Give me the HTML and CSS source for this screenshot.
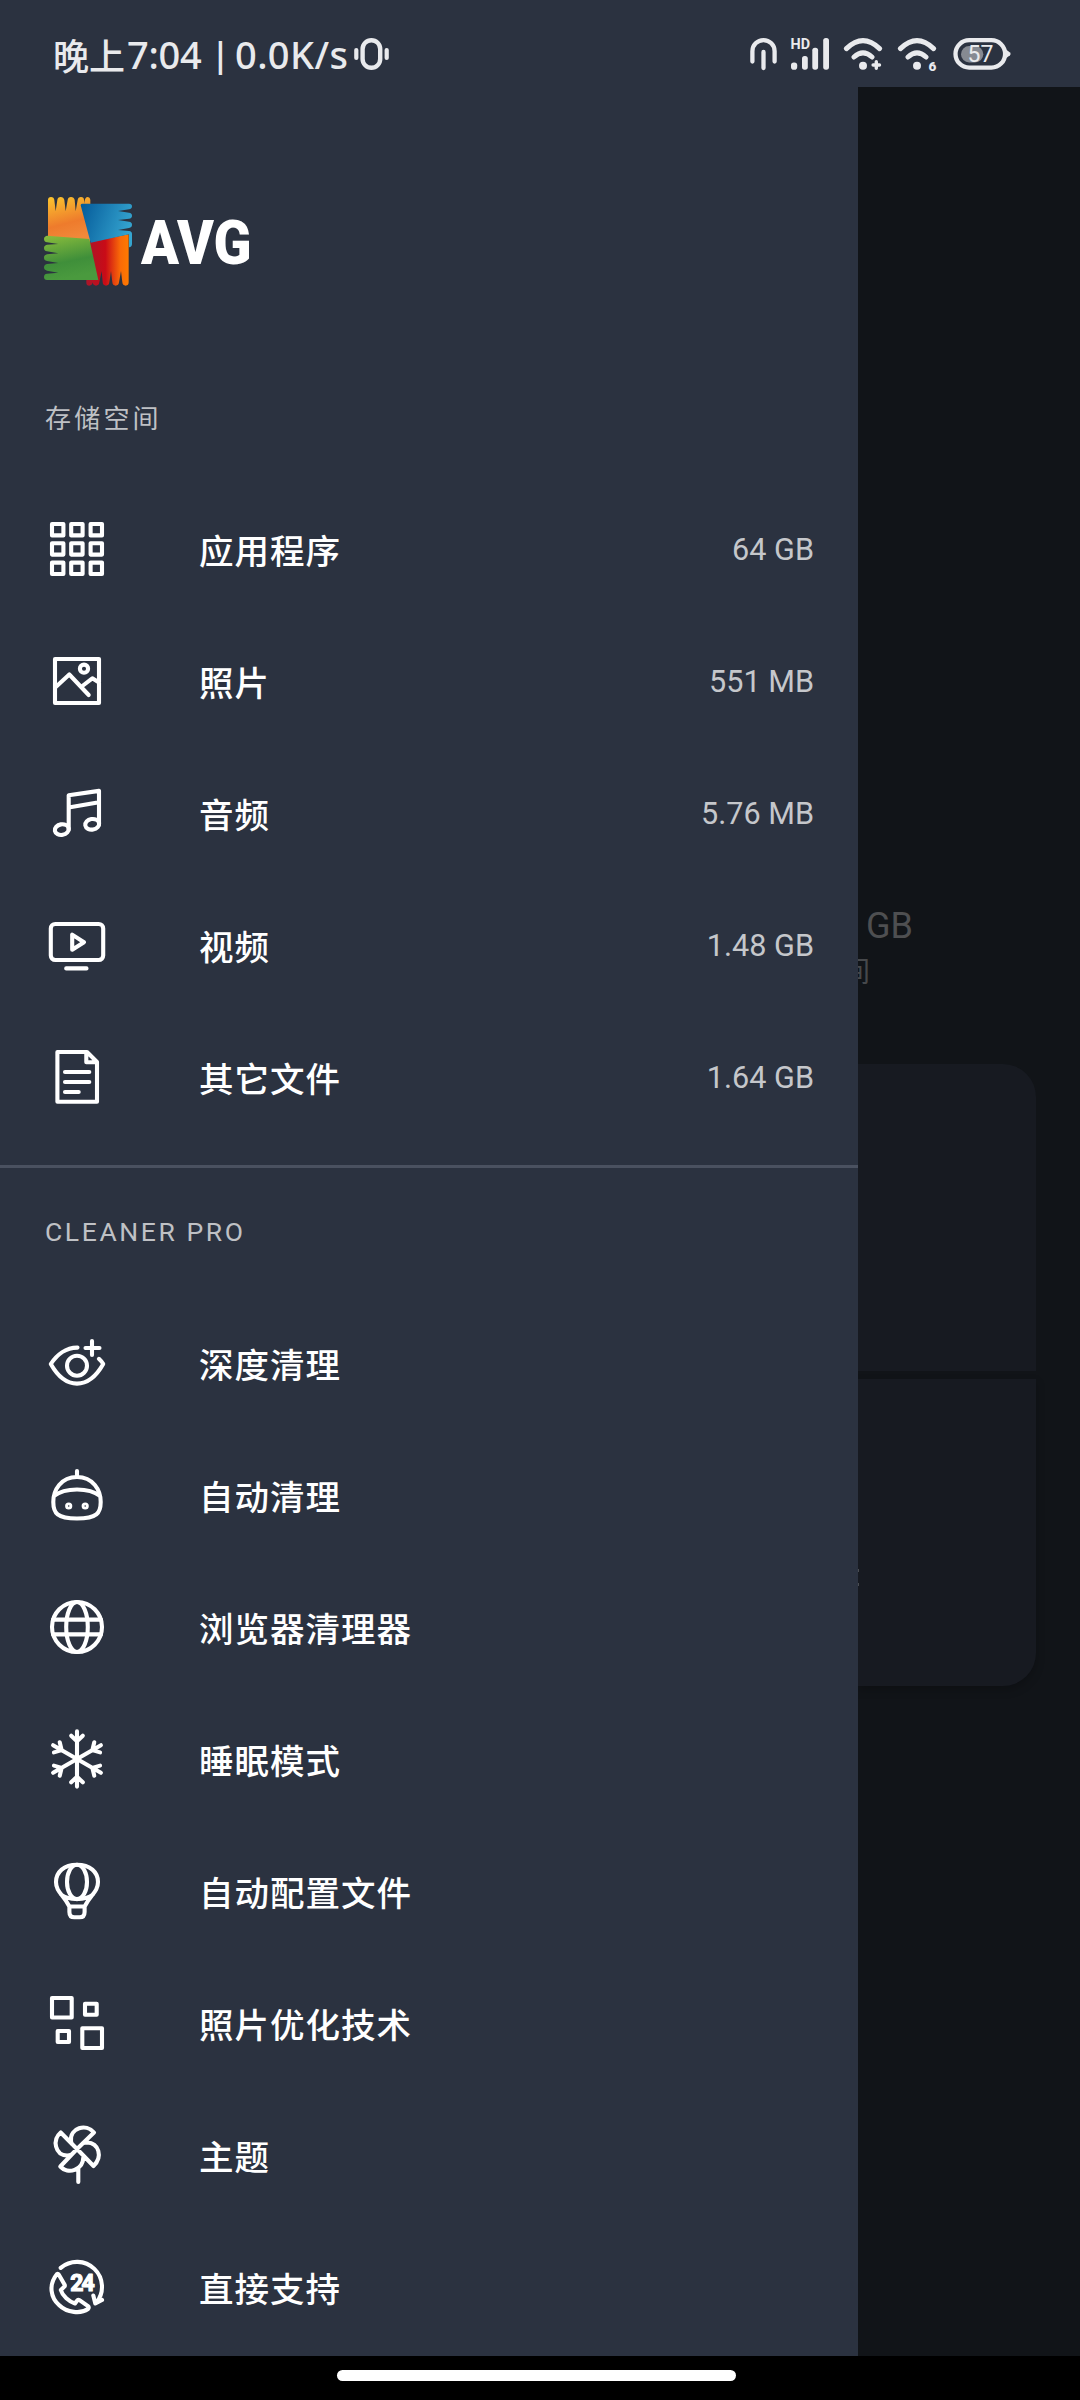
FILE: index.html
```html
<!DOCTYPE html>
<html lang="zh-CN">
<head>
<meta charset="utf-8">
<title>AVG Cleaner</title>
<link rel="stylesheet" href="styles.css">
</head>
<body>
<header class="status-bar">
  <div class="status-left">
    <span class="daypart">晚上</span><span class="clock">7:04</span><span class="bar">|</span><span class="speed">0.0K/s</span>
    <svg class="vibrate" width="36" height="32" viewBox="0 0 36 32"><rect x="8.6" y="2.2" width="17.6" height="27.6" rx="8.8" fill="none" stroke="currentColor" stroke-width="4.4"/><path d="M2.3 12v8M32.7 12v8" stroke="currentColor" stroke-width="4.2" stroke-linecap="round"/></svg>
  </div>
  <svg class="status-icons" width="264" height="48" viewBox="748 36 264 48" fill="none" stroke="currentColor" stroke-linecap="round">
    <path d="M752.4 61.5V51.2a11.1 11.1 0 0 1 22.2 0v10.3M763.5 52v16" stroke-width="4.3"/>
    <text class="hd" x="790.6" y="49" textLength="19.5" lengthAdjust="spacingAndGlyphs">HD</text>
    <g fill="currentColor" stroke="none"><rect x="791" y="62.5" width="6.2" height="7.2" rx="2.8"/><rect x="802" y="56" width="5.8" height="13.7" rx="2.6"/><rect x="812.3" y="47.7" width="5.8" height="22" rx="2.6"/><rect x="823.2" y="38" width="5.8" height="31.7" rx="2.6"/></g>
    <g id="wifi"><path d="M846.4 48.6q16.6-16 33.2 0M854 57q9-8.2 18 0" stroke-width="5"/><circle cx="863" cy="65.8" r="4" fill="currentColor" stroke="none"/></g>
    <path d="M876.3 61.8v6.4M873.1 65h6.4" stroke-width="3.4"/>
    <use href="#wifi" x="54"/>
    <text class="six" x="928.4" y="70.6">6</text>
    <rect x="955.5" y="40.2" width="49.6" height="27.4" rx="13.7" stroke-width="4.3"/>
    <path d="M1006 49.5l4 3q1.4 1.4 0 2.800l-4 3z" fill="currentColor" stroke="none"/>
    <rect x="961" y="46" width="22.300" height="16.4" rx="8.2" fill="#868a92" stroke="none"/>
    <text class="battery" x="967.6" y="62.400">57</text>
  </svg>
</header>

<main class="screen">
  <nav class="drawer">
    <div class="brand">
      <svg width="88" height="88.700" viewBox="42 50 264 266">
        <defs>
          <linearGradient id="yel" x1="0" y1="0" x2=".25" y2="1"><stop offset="0" stop-color="#fbc52e"/><stop offset=".65" stop-color="#ee7b2c"/><stop offset="1" stop-color="#f1893a"/></linearGradient>
          <linearGradient id="blu" x1="0" y1=".2" x2="1" y2=".5"><stop offset="0" stop-color="#075e9c"/><stop offset="1" stop-color="#35a5d0"/></linearGradient>
          <linearGradient id="red" x1="0" y1="0" x2="1" y2="0"><stop offset="0" stop-color="#a9162a"/><stop offset=".45" stop-color="#c90b17"/><stop offset=".8" stop-color="#f96a08"/><stop offset="1" stop-color="#ff7a00"/></linearGradient>
          <linearGradient id="grn" x1="0" y1="0" x2=".25" y2="1"><stop offset="0" stop-color="#8bbd3c"/><stop offset=".65" stop-color="#3f8f3a"/><stop offset="1" stop-color="#4a9a3e"/></linearGradient>
        </defs>
        <path fill="url(#yel)" d="M54 174V59q0-9 9-9t10 9l4 34 5-34q1-9 10-9t11 9l4 34 6-34q1-9 10-9t11 9l3 34 6-34q1-9 10-9t9 9l1 11q1-20 9-20t9 9v30L180 186z"/>
        <path fill="url(#red)" d="M180 186l116-24V306q0 10-9 10t-10-10l-4-34-6 34q-1 10-10 10t-10-10l-4-34-5 34q-1 10-10 10t-10-10l-3-34-7 34q-1 10-10 10t-10-10q-2 10-10 10-9 0-9-9l0-10z"/>
        <path fill="url(#blu)" d="M156 70H297q9 0 9 8t-9 9l-33 5 33 5q9 1 9 9t-9 9l-33 4 33 5q9 1 9 9t-9 10l-33 6 33 3q9 1 9 9v30q0 8-9 10V162L182 187 152 75q0-5 4-5z"/>
        <path fill="url(#grn)" d="M178 176L205 299H51q-9 0-9-9t9-10l34-3-34-6q-9-2-9-10t9-10l34-3-34-6q-9-2-9-10t9-10l34-3-34-6q-9-2-9-10t9-10l34-2-34-5q-9-2-9-10t9-10z"/>
      </svg>
      <svg class="wordmark" width="112" height="88" viewBox="0 0 112 88"><text x="0" y="66" textLength="110.500" lengthAdjust="spacingAndGlyphs">AVG</text></svg>
    </div>

    <h2 class="section-title storage">存储空间</h2>
    <ul class="menu">
      <li><svg class="icon" viewBox="0 0 72 72"><path d="M11 11h11.400v11.400H11zM30.200 11h11.400v11.400H30.200zM49.600 11H61v11.400H49.600zM11 30.200h11.400v11.400H11zM30.200 30.200h11.400v11.400H30.200zM49.600 30.200H61v11.400H49.600zM11 49.600h11.400V61H11zM30.200 49.600h11.400V61H30.200zM49.600 49.600H61V61H49.600z"/></svg><span class="label">应用程序</span><span class="value">64 GB</span></li>
      <li><svg class="icon" viewBox="0 0 72 72"><path d="M14 14h44v44H14zM14.500 42.300L28.300 29.500 47.700 50M40.700 41.500l10.600-8.200L58 37.500"/><circle cx="43" cy="23.700" r="4.100"/></svg><span class="label">照片</span><span class="value">551 MB</span></li>
      <li><svg class="icon" viewBox="0 0 72 72"><path d="M27.700 52.500V18.300L58 13.900v33M27.700 30.500L58 25.300"/><ellipse cx="20.800" cy="52.600" rx="7" ry="5.300" transform="rotate(-10 20.800 52.600)"/><ellipse cx="51.200" cy="47.300" rx="7" ry="5.300" transform="rotate(-10 51.200 47.300)"/></svg><span class="label">音频</span><span class="value">5.76 MB</span></li>
      <li><svg class="icon" viewBox="0 0 72 72"><rect x="9.800" y="15" width="52.400" height="36" rx="4.500"/><path d="M31.200 25.600v15.200L43 33.200zM25.200 59.400h20.300"/></svg><span class="label">视频</span><span class="value">1.48 GB</span></li>
      <li><svg class="icon" viewBox="0 0 72 72"><path d="M16.400 11H46l10 10v39.700H16.400zM45.300 11.500v9.700H56M24 31h24.300M24 41h24.300M24 51h13.700"/></svg><span class="label">其它文件</span><span class="value">1.64 GB</span></li>
    </ul>
    <hr class="divider">
    <h2 class="section-title pro">CLEANER PRO</h2>
    <ul class="menu">
      <li><svg class="icon" viewBox="0 0 72 72"><path d="M36.500 20.600C25 20.500 15.500 28 9.800 37 16 48 25 56.600 36 56.600S56 48 62.200 37c-1-2-2.500-3.500-4.300-5.200M51 14v14M44.500 21h14"/><circle cx="36" cy="38.700" r="10"/></svg><span class="label">深度清理</span></li>
      <li><svg class="icon" viewBox="0 0 72 72"><path d="M36 12v6M36 18C20 18 12.300 31 12.300 43c0 11 3.700 16.500 23.700 16.500S59.700 54 59.700 43C59.700 31 52 18 36 18zM13 37c5-4 13-6.500 23-6.500S54 33 59 37"/><g stroke-width="2.800"><circle cx="27.700" cy="47" r="2.200"/><circle cx="44.200" cy="47" r="2.200"/></g></svg><span class="label">自动清理</span></li>
      <li><svg class="icon" viewBox="0 0 72 72"><circle cx="36" cy="36" r="25"/><ellipse cx="36" cy="36" rx="10.800" ry="25"/><path d="M12 28.600h48M12 43.400h48"/></svg><span class="label">浏览器清理器</span></li>
      <li><svg class="icon" viewBox="0 0 72 72"><g id="arm"><path d="M36 36V8.400M30.200 12.700l5.800 5.600 5.800-5.600"/></g><use href="#arm" transform="rotate(60 36 36)"/><use href="#arm" transform="rotate(120 36 36)"/><use href="#arm" transform="rotate(180 36 36)"/><use href="#arm" transform="rotate(240 36 36)"/><use href="#arm" transform="rotate(300 36 36)"/></svg><span class="label">睡眠模式</span></li>
      <li><svg class="icon" viewBox="0 0 72 72"><path d="M36 9.700C23 9.700 15 17 15 27c0 10 7.500 12.500 13.400 24.500V57q0 5.300 5 5.300h5.200q5 0 5-5.300v-5.500C49.500 39.500 57 37 57 27 57 17 49 9.700 36 9.700zM20 39.500C25 43.500 30 44 36 44s11-.5 16-4.500M28.400 51.500h15.200"/><ellipse cx="36" cy="26.900" rx="10" ry="17.200"/></svg><span class="label">自动配置文件</span></li>
      <li><svg class="icon" viewBox="0 0 72 72"><path d="M11 11h19.700v19.500H11zM44 16.700h11.700v11H44zM16.700 44H28v11H16.700zM41.300 41.300H61V61H41.300z"/></svg><span class="label">照片优化技术</span></li>
      <li><svg class="icon" viewBox="0 0 72 72"><path d="M36 30L19.700 13.500C11 21 14 36 26 36.500q3 0 4.500-1M36 30L53 13.500C45 4 29 9 30 21.500q0 2 1 3.500M36 30l16.500 17C62 38 58 24 46 23.500q-3 0-4.500 1M36 30L19.300 47.500C27 56 42 51 42.300 38.500M37.300 50v13"/></svg><span class="label">主题</span></li>
      <li><svg class="icon" viewBox="0 0 72 72"><path d="M19.700 16.900A25 25 0 0 1 55.500 51.500M52.300 44.500l2 8L61 49M16 23c-9 11-6 24 2 31 8 8 22 9 29 4 1-1 1-2 0-2.800L38.500 49.200q-1.500-1-2.500.5L34 52.500C28 50.500 21.500 45 19.800 39l3.200-3q1.300-1 .5-2.500L18 24q-1-1.500-2-1z"/><text class="digits" x="29.300" y="40" textLength="24.500">24</text></svg><span class="label">直接支持</span></li>
    </ul>
  </nav>

  <section class="backdrop">
    <p class="total">GB</p>
    <p class="caption">间</p>
    <div class="tile top"></div>
    <div class="tile bottom"><i class="speck"></i><i class="speck"></i></div>
  </section>
</main>
<footer class="nav-bar"><div class="home"></div></footer>
</body>
</html>
```
FILE: styles.css
```css
* { box-sizing: border-box; }

body {
  margin: 0;
  width: 1080px;
  height: 2400px;
  overflow: hidden;
  display: flex;
  flex-direction: column;
  background: #111418;
  color: #fff;
  font-family: Roboto, "Noto Sans CJK SC", sans-serif;
}

.status-bar {
  height: 87px;
  flex: none;
  display: flex;
  justify-content: space-between;
  align-items: flex-start;
  padding: 36px 68px 0 53px;
  background: #2b3240;
  color: #e9eaed;
}

.status-left {
  display: flex;
  height: 36px;
  align-items: center;
  font: 500 38px/36px "Noto Sans", "Noto Sans CJK SC", sans-serif;
  white-space: nowrap;
}

.status-left span { flex: none; }

.daypart { width: 74px; font-family: "Noto Sans CJK SC", sans-serif; font-size: 36px; font-weight: 500; }
.clock { width: 84px; letter-spacing: -.3px; }
.bar { width: 24px; font-size: 34px; font-weight: 600; }
.speed { width: 119px; letter-spacing: .4px; }
.vibrate { display: block; }
.status-icons { display: block; }

.status-icons text { fill: currentColor; stroke: none; font-family: Roboto, sans-serif; }
.status-icons .hd { font-size: 14.5px; font-weight: 700; }
.status-icons .six { font-size: 13.5px; font-weight: 900; }
.status-icons .battery { font-size: 23px; }

.screen { flex: 1; display: flex; min-height: 0; }

.drawer { width: 858px; flex: none; background: #2b3240; }

.brand {
  display: flex;
  align-items: center;
  gap: 9px;
  height: 89px;
  margin: 110px 0 0 44px;
}

.wordmark { overflow: visible; }

.wordmark text {
  font: 900 62px Roboto, sans-serif;
  fill: #fff;
}

.section-title {
  margin: 0;
  padding-left: 45px;
  font-size: 26px;
  font-weight: 400;
  line-height: 40px;
  color: #bfc1c5;
}

.storage { margin-top: 113px; height: 84px; letter-spacing: 3.2px; }
.pro { margin-top: 44px; height: 85px; font-size: 26.5px; letter-spacing: 2.6px; }

.menu { list-style: none; margin: 0; padding: 0; }

.menu li {
  height: 132px;
  display: flex;
  align-items: center;
  padding: 0 44px 0 41px;
}

.icon {
  width: 72px;
  height: 72px;
  flex: none;
  fill: none;
  stroke: #fff;
  stroke-width: 4.1px;
  stroke-linecap: round;
  stroke-linejoin: round;
}

.icon g[stroke-width] { stroke-width: 2.8px; }

.digits {
  font: 700 23px Roboto, sans-serif;
  fill: #fff;
  stroke-width: 1.2px;
}

.label {
  flex: 1;
  margin: -1px 0 0 86px;
  font-family: "Noto Sans CJK SC", sans-serif;
  font-size: 34.5px;
  font-weight: 500;
  letter-spacing: 1px;
}

.value { font-size: 30.6px; color: #c5c7cb; }

.divider { height: 3px; margin: 22px 0 0; border: 0; background: #4a5160; }

.backdrop { flex: 1; overflow: hidden; }
.backdrop p { margin: 0; font-weight: 400; }

.total { padding: 818px 0 0 8px; font-size: 36px; line-height: 42px; color: #4e4f51; }
.backdrop .caption { margin: -1px 0 0 -16px; font-family: "Noto Sans CJK SC", sans-serif; font-size: 28px; line-height: 48px; color: #46484b; }

.tile {
  width: 178px;
  height: 307px;
  background: #171a21;
  box-shadow: 0 4px 10px rgba(0, 0, 0, .22);
}

.tile.top { margin-top: 70px; border-top-right-radius: 33px; box-shadow: none; }

.tile.bottom {
  margin-top: 8px;
  border-bottom-right-radius: 33px;
  display: flex;
  flex-direction: column;
  gap: 11px;
  padding-top: 190px;
}

.speck { width: 1px; height: 3px; background: #4a4d52; }

.nav-bar {
  flex: none;
  height: 44px;
  padding: 14px 0 0 337px;
  background: #000;
}

.home { width: 399px; height: 11px; border-radius: 6px; background: #fff; }
```
